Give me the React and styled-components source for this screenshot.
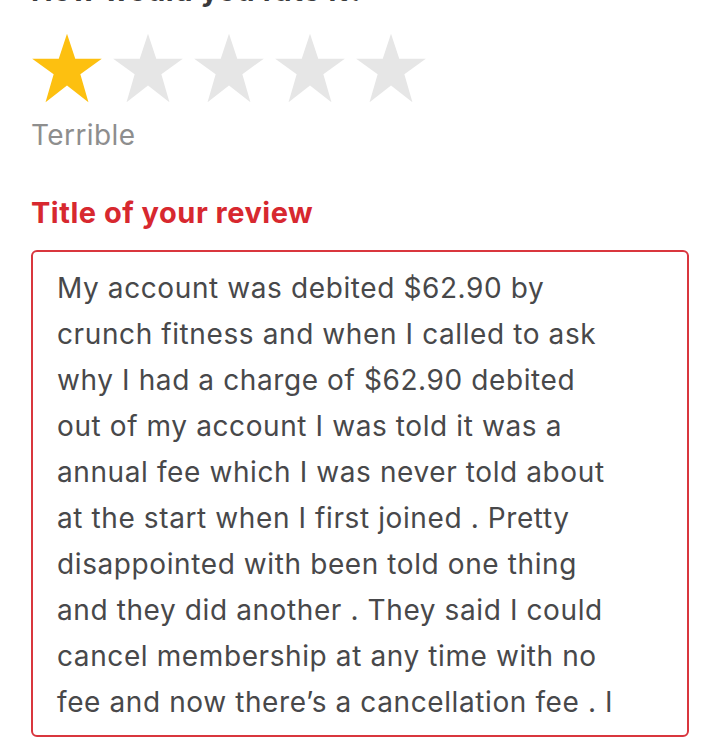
import React from "react";
import styled, { createGlobalStyle } from "styled-components";

const GlobalStyle = createGlobalStyle`
  html, body {
    margin: 0;
    padding: 0;
    background: #fff;
  }
  body {
    font-family: Inter, Roboto, "Liberation Sans", sans-serif;
    -webkit-font-smoothing: antialiased;
  }
`;

const Page = styled.div`
  width: 720px;
  height: 747px;
  overflow: hidden;
  padding: 0 31px;
  box-sizing: border-box;
`;

const Question = styled.div`
  margin-top: -25px;
  height: 32px;
  line-height: 32px;
  font-size: 29px;
  font-weight: 700;
  color: #3a3a3c;
  letter-spacing: 0.6px;
`;

const Stars = styled.div`
  display: flex;
  gap: 9px;
  margin-top: 25px;
`;

const Rating = styled.div`
  margin-top: 14px;
  font-size: 28px;
  color: #8e8e8e;
  line-height: 34px;
  letter-spacing: 0.4px;
`;

const Label = styled.div`
  margin-top: 44px;
  font-size: 29px;
  font-weight: 700;
  color: #d7282f;
  line-height: 34px;
  letter-spacing: 0.5px;
`;

const Field = styled.div`
  margin-top: 20px;
  border: 2px solid #d9363e;
  border-radius: 6px;
  padding: 13px 24px 10px;
  height: 487px;
  box-sizing: border-box;
`;

const Line = styled.div`
  font-size: 28px;
  line-height: 46px;
  color: #48484a;
  white-space: nowrap;
  letter-spacing: 0.6px;
`;

const Star = ({ filled }) => (
  <svg width="72" height="72" viewBox="0 0 24 24">
    <path
      d="M12 0.6 L14.75 8.9 L23.6 8.9 L16.45 14.1 L19.15 23.4 L12 17.8 L4.85 23.4 L7.55 14.1 L0.4 8.9 L9.25 8.9 Z"
      fill={filled ? "#fdc010" : "#e6e6e6"}
    />
  </svg>
);

const lines = [
  "My account was debited $62.90 by",
  "crunch fitness and when I called to ask",
  "why I had a charge of $62.90 debited",
  "out of my account I was told it was a",
  "annual fee which I was never told about",
  "at the start when I first joined . Pretty",
  "disappointed with been told one thing",
  "and they did another . They said I could",
  "cancel membership at any time with no",
  "fee and now there\u2019s a cancellation fee . I",
];

export default function App() {
  return (
    <>
      <GlobalStyle />
      <Page>
        <Question>How would you rate it?</Question>
        <Stars>
          {[1, 2, 3, 4, 5].map((n) => (
            <Star key={n} filled={n <= 1} />
          ))}
        </Stars>
        <Rating>Terrible</Rating>
        <Label>Title of your review</Label>
        <Field>
          {lines.map((l) => (
            <Line key={l}>{l}</Line>
          ))}
        </Field>
      </Page>
    </>
  );
}
